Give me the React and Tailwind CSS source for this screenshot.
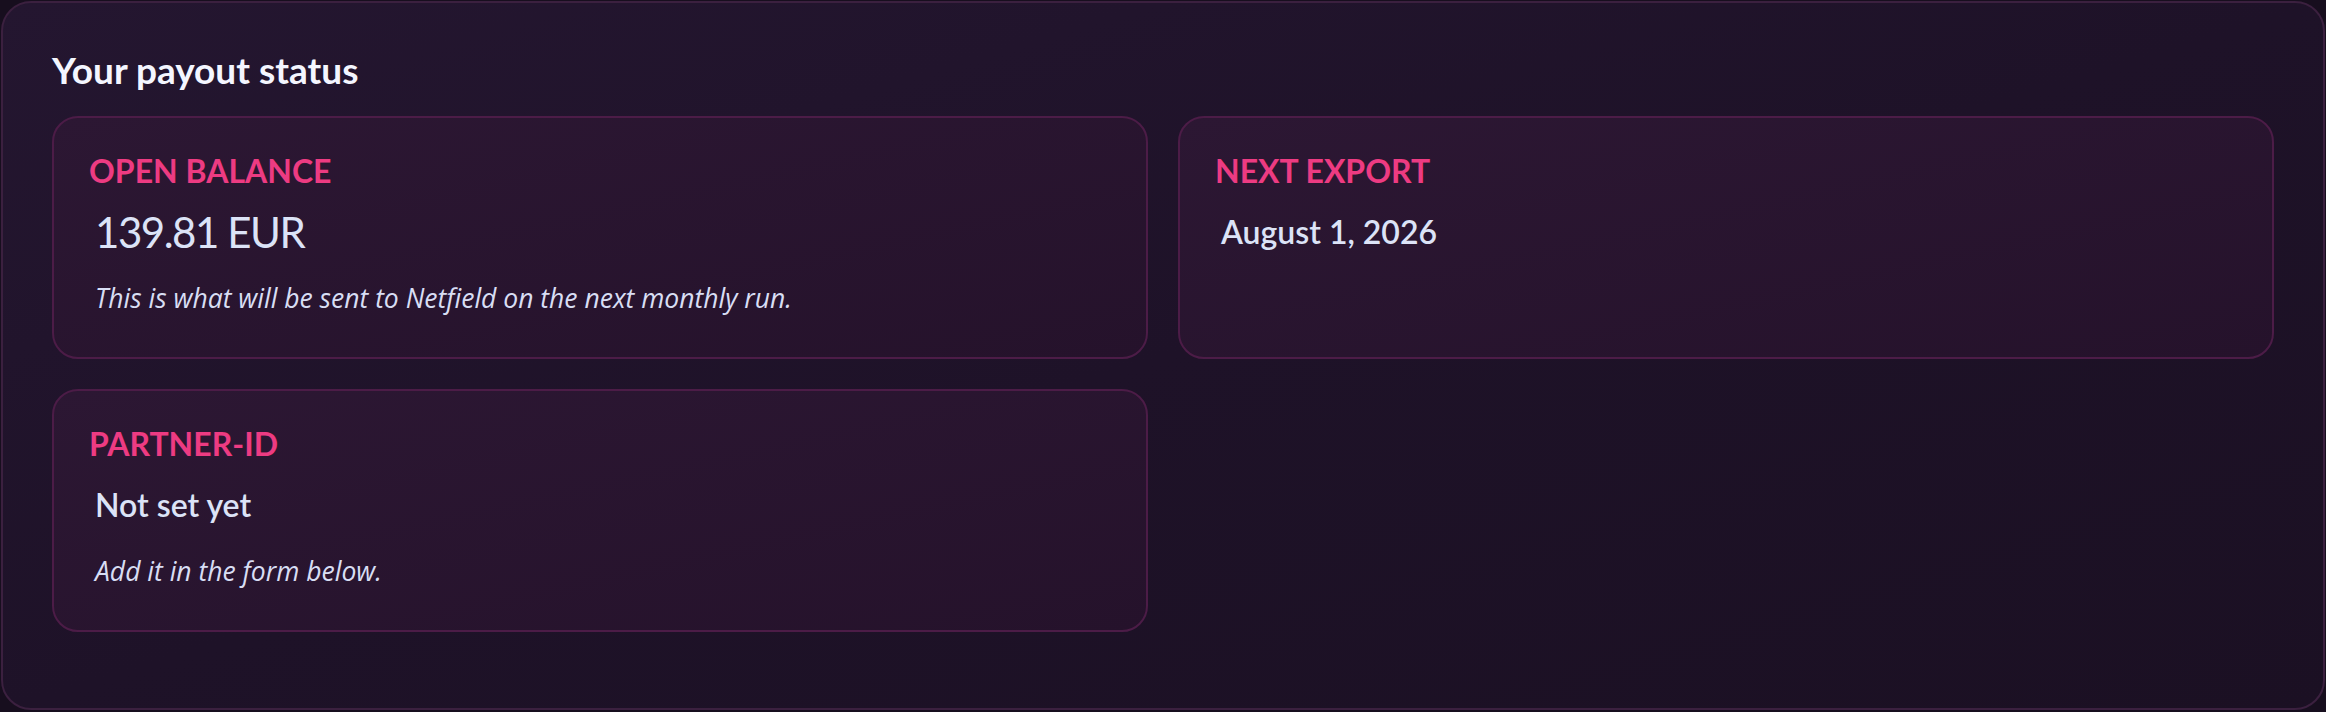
const cards = [
  {
    label: "Open balance",
    value: "139.81 EUR",
    big: true,
    note: "This is what will be sent to Netfield on the next monthly run.",
  },
  { label: "Next export", value: "August 1, 2026" },
  { label: "Partner-ID", value: "Not set yet", note: "Add it in the form below." },
];

const StatusCard = ({ label, value, big, note }) => (
  <div className="rounded-[26px] border-2 border-[#4c1c47] bg-linear-to-br from-[#2c1733] to-[#25122b] px-[35px] pt-[34px] pb-[43px]">
    <div className="text-[32px] leading-[38px] font-bold uppercase text-[#ed3b82]">
      {label}
    </div>
    <div
      className={
        big
          ? "mt-[22px] pl-[6px] text-[42px] leading-[40px] tracking-[-0.035em] text-[#dce3f7]"
          : "mt-[22px] pl-[6px] text-[32px] leading-[40px] font-semibold text-[#dce3f7]"
      }
    >
      {value}
    </div>
    {note && (
      <p className="mt-[30px] pl-[6px] font-['Open_Sans',sans-serif] text-[26.5px] leading-[32px] italic text-[#d8def4]">
        {note}
      </p>
    )}
  </div>
);

const App = () => {
  return (
    <div className="min-h-screen bg-[#170e1e] p-px font-['Lato',sans-serif]">
      <section className="rounded-[30px] border-2 border-[#3b203f] bg-linear-to-br from-[#241630] via-[#1e1228] to-[#1b1023] px-[49px] pt-[45px] pb-[76px]">
        <h2 className="text-[37px] leading-[44px] font-bold text-[#f4f6ff]">
          Your payout status
        </h2>
        <div className="mt-[24px] grid grid-cols-2 gap-[30px]">
          {cards.map((c) => (
            <StatusCard key={c.label} {...c} />
          ))}
        </div>
      </section>
    </div>
  );
};

export default App;
